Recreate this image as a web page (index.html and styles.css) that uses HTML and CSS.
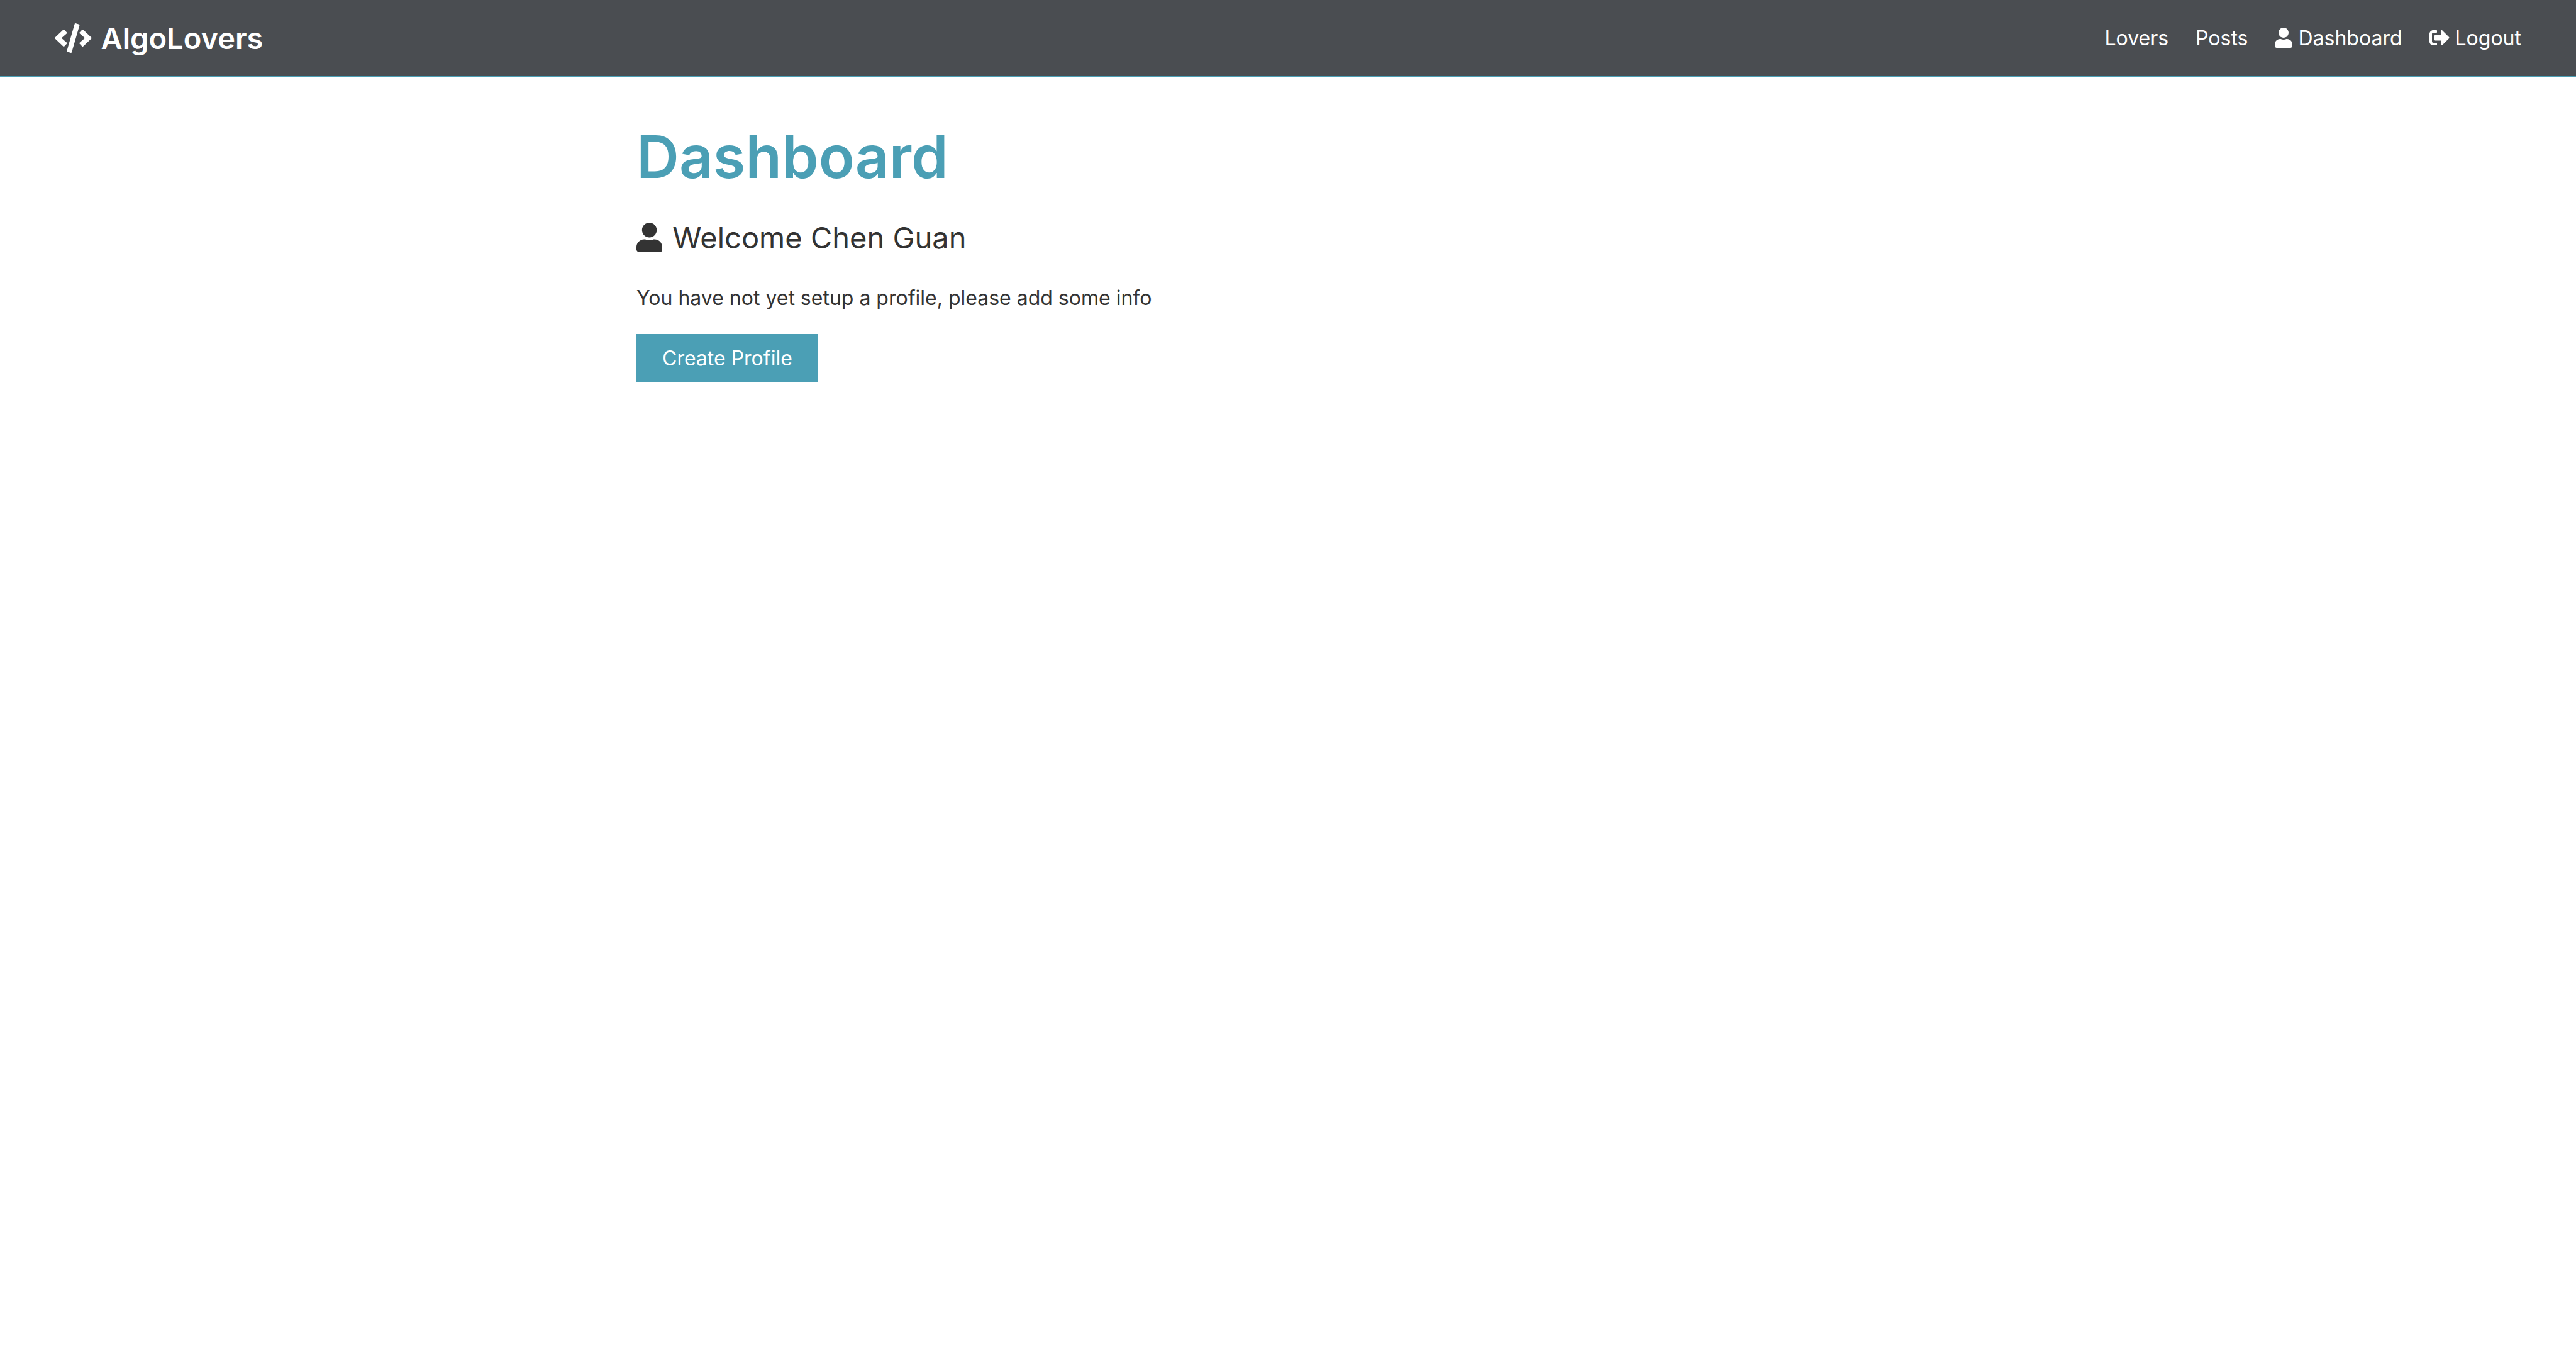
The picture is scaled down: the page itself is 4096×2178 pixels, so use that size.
FILE: index.html
```html
<!DOCTYPE html>
<html lang="en">
<head>
  <meta charset="utf-8">
  <meta name="viewport" content="width=device-width, initial-scale=1">
  <title>AlgoLovers</title>
  <link rel="stylesheet" href="styles.css">
</head>
<body>
  <svg class="sprite" aria-hidden="true">
    <symbol id="user" viewBox="0 0 448 512"><path d="M224 256c70.7 0 128-57.3 128-128S294.700 0 224 0 96 57.300 96 128s57.300 128 128 128zm89.600 32h-16.700c-22.200 10.200-46.900 16-72.900 16s-50.600-5.800-72.900-16h-16.700C60.200 288 0 348.200 0 422.400V464c0 26.500 21.500 48 48 48h352c26.500 0 48-21.500 48-48v-41.600c0-74.200-60.200-134.400-134.400-134.400z"/></symbol>
    <symbol id="code" viewBox="0 0 640 512"><path d="M278.900 511.500l-61-17.700c-6.400-1.800-10-8.500-8.200-14.900L346.200 8.700c1.800-6.400 8.500-10 14.900-8.200l61 17.700c6.400 1.800 10 8.500 8.200 14.900L293.800 503.300c-1.900 6.400-8.500 10.100-14.900 8.200zm-114-112.200l43.500-46.400c4.600-4.900 4.300-12.700-.8-17.200L117 256l90.600-79.700c5.100-4.500 5.500-12.300.8-17.200l-43.500-46.400c-4.500-4.800-12.100-5.100-17-.5L3.800 247.200c-5.100 4.700-5.100 12.800 0 17.500l144.100 135.100c4.900 4.600 12.500 4.400 17-.5zm327.200.6l144.100-135.100c5.100-4.700 5.100-12.800 0-17.500L492.100 112.100c-4.800-4.500-12.400-4.300-17 .5L431.600 159c-4.600 4.900-4.300 12.700.8 17.200L523 256l-90.600 79.700c-5.100 4.500-5.500 12.300-.8 17.200l43.500 46.400c4.500 4.900 12.100 5.100 17 .6z"/></symbol>
    <symbol id="sign-out" viewBox="0 0 512 512"><path d="M497 273L329 441c-15 15-41 4.500-41-17v-96H152c-13.300 0-24-10.700-24-24v-96c0-13.300 10.700-24 24-24h136V88c0-21.400 25.900-32 41-17l168 168c9.300 9.400 9.300 24.600 0 34zM192 436v-40c0-6.600-5.400-12-12-12H96c-17.700 0-32-14.300-32-32V160c0-17.700 14.300-32 32-32h84c6.600 0 12-5.400 12-12V76c0-6.600-5.400-12-12-12H96c-53 0-96 43-96 96v192c0 53 43 96 96 96h84c6.600 0 12-5.400 12-12z"/></symbol>
  </svg>

  <nav class="navbar">
    <h1 class="brand">
      <a href="#"><svg class="icon icon-code" aria-hidden="true"><use href="#code"/></svg> AlgoLovers</a>
    </h1>
    <ul class="nav-links">
      <li><a href="#">Lovers</a></li>
      <li><a href="#">Posts</a></li>
      <li><a href="#"><svg class="icon icon-user" aria-hidden="true"><use href="#user"/></svg> Dashboard</a></li>
      <li><a href="#"><svg class="icon icon-sign-out" aria-hidden="true"><use href="#sign-out"/></svg> Logout</a></li>
    </ul>
  </nav>

  <main class="container">
    <h1 class="title">Dashboard</h1>
    <p class="lead"><svg class="icon icon-user" aria-hidden="true"><use href="#user"/></svg> Welcome Chen Guan</p>
    <p class="note">You have not yet setup a profile, please add some info</p>
    <a class="btn" href="#">Create Profile</a>
  </main>
</body>
</html>
```
FILE: styles.css
```css
:root {
  --primary: #4b9fb5;
  --dark: #4a4d51;
}

* {
  box-sizing: border-box;
  margin: 0;
  padding: 0;
}

body {
  font-family: Inter, "Liberation Sans", sans-serif;
  font-size: 32px;
  line-height: 51px;
  color: #333;
  background: #fff;
}

a {
  color: inherit;
  text-decoration: none;
}

.sprite {
  display: none;
}

.icon {
  height: 1em;
  fill: currentColor;
  vertical-align: -0.125em;
}

.icon-user { width: 0.875em; }
.icon-code { width: 1.25em; }
.icon-sign-out { width: 1em; }

.brand .icon,
.lead .icon {
  margin-right: 3px;
}

.navbar {
  display: flex;
  justify-content: space-between;
  align-items: center;
  padding: 22px 87px;
  color: #fff;
  background: var(--dark);
  border-bottom: 2px solid var(--primary);
}

.brand {
  font-size: 47px;
  font-weight: 600;
  line-height: 77px;
}

.nav-links {
  display: flex;
  gap: 43px;
  list-style: none;
}

.container {
  max-width: 2200px;
  margin: 69px auto 0;
  padding: 0 64px;
}

.title {
  margin-bottom: 32px;
  font-size: 94px;
  font-weight: 600;
  line-height: 115px;
  color: var(--primary);
}

.lead {
  margin-bottom: 32px;
  font-size: 47px;
  line-height: 77px;
}

.note {
  margin-bottom: 32px;
}

.btn {
  display: inline-block;
  padding: 13px 41px;
  color: #fff;
  background: var(--primary);
}
```
